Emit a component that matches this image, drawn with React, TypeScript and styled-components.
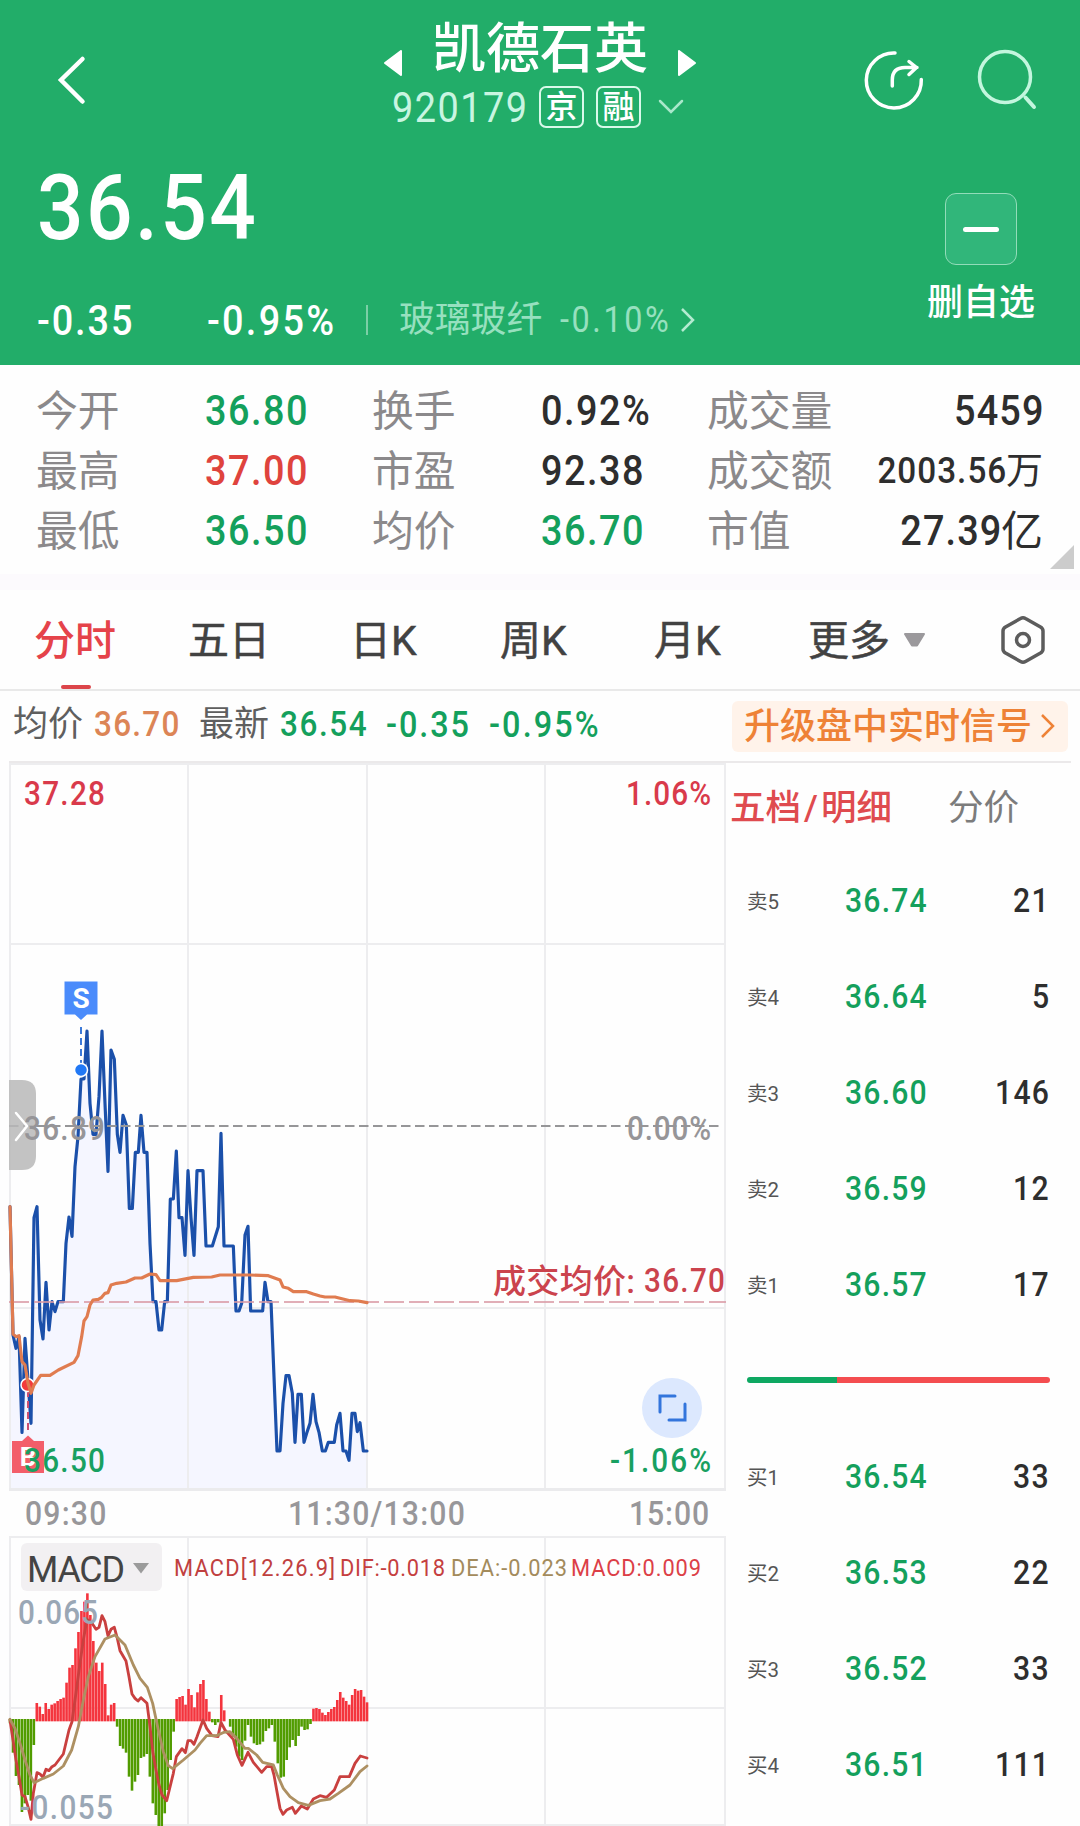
import React from "react";
import styled, { createGlobalStyle } from "styled-components";

const GREEN = "#22ad69";
const DOWN = "#14a05c";
const UP = "#df433d";
const INK = "#2e2e2e";

const GlobalStyle = createGlobalStyle`
  * { box-sizing: border-box; }
  body {
    margin: 0;
    background: #fff;
    font-family: Roboto, "Noto Sans CJK SC", sans-serif;
    color: ${INK};
  }
  svg { display: block; flex: none; }
`;

const Page = styled.main`
  width: 1080px;
  height: 1826px;
  overflow: hidden;
  display: flex;
  flex-direction: column;
  background: #fefefe;
`;

/* Figures are set narrow and loosely spaced; $right keeps the right edge fixed. */
const Num = styled.span<{
  $size: number;
  $ls?: number;
  $color?: string;
  $weight?: number;
  $right?: boolean;
}>`
  display: inline-block;
  font-size: ${(p) => p.$size}px;
  letter-spacing: ${(p) => p.$ls ?? 0.04}em;
  margin-right: ${(p) => (p.$right ? -(p.$ls ?? 0.04) * 0.9 : 0)}em;
  font-weight: ${(p) => p.$weight ?? 500};
  color: ${(p) => p.$color ?? "inherit"};
  transform: scaleX(0.9);
  transform-origin: ${(p) => (p.$right ? "right" : "left")} center;
  white-space: nowrap;
`;

/* ---------- header ---------- */

const Header = styled.header`
  height: 365px;
  flex: none;
  background: ${GREEN};
  color: #fff;
`;

const NavBar = styled.div`
  height: 140px;
  display: grid;
  grid-template-columns: 340px 400px 340px;
`;

const NavLeft = styled.div`
  padding: 55px 0 0 57px;
`;

const NavCenter = styled.div`
  display: flex;
  flex-direction: column;
  align-items: center;
  padding-top: 14px;
`;

const TitleLine = styled.div`
  display: flex;
  align-items: center;
  gap: 30px;
  height: 72px;
`;

const Title = styled.h1`
  margin: 0;
  font-size: 54px;
  line-height: 72px;
  font-weight: 500;
`;

const Step = styled.span`
  padding-top: 26px;
`;

const CodeLine = styled.div`
  width: 400px;
  display: flex;
  align-items: center;
  height: 42px;
  padding-left: 52px;
`;

const Code = styled.span`
  width: 135px;
`;

const Mark = styled.span`
  width: 45px;
  height: 42px;
  margin-left: 12px;
  border: 2px solid #d9f9ea;
  border-radius: 7px;
  font-size: 32px;
  line-height: 38px;
  text-align: center;
  font-weight: 500;
`;

const Drop = styled.span`
  margin-left: 17px;
`;

const NavRight = styled.div`
  display: flex;
  gap: 50px;
  padding: 49px 0 0 123px;
`;

const QuoteArea = styled.div`
  display: flex;
  justify-content: space-between;
  height: 225px;
`;

const QuoteLeft = styled.div`
  padding-left: 37px;
`;

const Price = styled.div`
  height: 135px;
  line-height: 136px;
`;

const ChangeLine = styled.div`
  display: flex;
  align-items: center;
  height: 90px;
`;

const Change = styled.span<{ $w: number }>`
  width: ${(p) => p.$w}px;
`;

const Divider = styled.i`
  width: 2px;
  height: 30px;
  margin: 0 31px 0 0;
  background: #7bcfa6;
`;

const Sector = styled.span`
  display: flex;
  align-items: center;
  color: #97e0bf;
  white-space: nowrap;
`;

const SectorName = styled.span`
  width: 161px;
  font-size: 35.8px;
  line-height: 50px;
`;

const SectorChange = styled.span`
  width: 119px;
`;

const Watch = styled.div`
  width: 126px;
  margin-right: 36px;
  padding-top: 53px;
  display: flex;
  flex-direction: column;
  align-items: center;
  font-size: 36px;
  font-weight: 500;
  line-height: 48px;
  white-space: nowrap;
`;

const WatchButton = styled.span`
  width: 72px;
  height: 72px;
  margin-bottom: 14px;
  display: grid;
  place-items: center;
  border: 1.5px solid #92dcb9;
  border-radius: 11px;
  background: #31b67a;
`;

const Minus = styled.i`
  width: 36px;
  height: 5px;
  border-radius: 3px;
  background: #fff;
`;

/* ---------- stats ---------- */

const Stats = styled.section`
  position: relative;
  height: 209px;
  flex: none;
  padding: 15px 37px 0 37px;
  display: grid;
  grid-template-columns: 168px 168px 168px 167px 335px;
  grid-auto-rows: 60px;
  align-items: center;
`;

const StatLabel = styled.span`
  margin-left: -1px;
  font-size: 41.8px;
  line-height: 56px;
  padding-top: 4px;
  color: #8b898b;
  white-space: nowrap;
`;

const LastStat = styled.span`
  display: flex;
  justify-content: space-between;
  align-items: center;
  height: 60px;
`;

const StatValue = styled.span`
  display: flex;
  align-items: center;
  font-weight: 400;
`;

const Unit = styled.span<{ $size: number }>`
  font-size: ${(p) => p.$size}px;
  line-height: 56px;
  padding-top: 3px;
`;

const Corner = styled.i`
  position: absolute;
  right: 6px;
  bottom: 5px;
  border-left: 24px solid transparent;
  border-bottom: 24px solid #cccccc;
`;

const Band = styled.div`
  height: 16px;
  flex: none;
  background: #fcfafd;
`;

/* ---------- tabs ---------- */

const Tabs = styled.nav`
  height: 101px;
  flex: none;
  display: flex;
  align-items: stretch;
  padding-left: 34px;
  border-bottom: 2px solid #e9e9e9;
`;

const Tab = styled.div<{ $w: number; $active?: boolean }>`
  width: ${(p) => p.$w}px;
  display: flex;
  align-items: center;
  gap: 14px;
  font-size: 41px;
  font-weight: ${(p) => (p.$active ? 500 : 400)};
  color: ${(p) => (p.$active ? "#e5434a" : "#424242")};
  -webkit-text-stroke: ${(p) => (p.$active ? "0" : "0.5px #424242")};
  white-space: nowrap;
  position: relative;
`;

const TabText = styled.span`
  line-height: 60px;
  padding-top: 3px;
`;

const Underline = styled.i`
  position: absolute;
  left: 27px;
  bottom: 0;
  width: 30px;
  height: 4px;
  border-radius: 2px;
  background: #dc454a;
`;

/* ---------- info line ---------- */

const InfoLine = styled.div`
  height: 72px;
  flex: none;
  margin: 0 9px;
  padding-left: 4px;
  display: flex;
  align-items: center;
  border-bottom: 2px solid #ebe9ea;
`;

const InfoItem = styled.span<{ $w: number }>`
  width: ${(p) => p.$w}px;
  font-size: 35px;
  line-height: 60px;
  padding-bottom: 2px;
  color: #5f5f5f;
  white-space: nowrap;
`;

const Upgrade = styled.span`
  width: 336px;
  height: 51px;
  margin-left: auto;
  margin-right: 3px;
  padding: 0 13px 0 12px;
  display: flex;
  align-items: center;
  justify-content: space-between;
  border-radius: 6px;
  background: #fff3ea;
  color: #ee8236;
  font-size: 36px;
  font-weight: 500;
  white-space: nowrap;
`;

const UpgradeText = styled.span`
  line-height: 48px;
  padding-top: 2px;
`;

/* ---------- body ---------- */

const Body = styled.section`
  flex: 1;
  display: grid;
  grid-template-columns: 727px 353px;
  min-height: 0;
`;

const Charts = styled.div`
  display: flex;
  flex-direction: column;
`;

const TimeAxis = styled.div`
  height: 45px;
  display: grid;
  grid-template-columns: 263px 1fr auto;
  align-items: center;
  padding: 0 18px 1px 25px;
  color: #98979a;
`;

const Book = styled.div`
  display: flex;
  flex-direction: column;
  padding: 0 31px 0 20px;
`;

const BookTabs = styled.div`
  height: 89px;
  margin-left: -17px;
  padding-bottom: 7px;
  display: flex;
  align-items: center;
  font-size: 35.5px;
  white-space: nowrap;
`;

const BookTab = styled.span<{ $w: number; $active?: boolean }>`
  width: ${(p) => p.$w}px;
  color: ${(p) => (p.$active ? "#df4b4f" : "#7c7c7c")};
  font-weight: ${(p) => (p.$active ? 500 : 400)};
`;

const Slash = styled.span`
  margin: 0 3px;
`;

const BookRow = styled.div`
  height: 96px;
  flex: none;
  display: grid;
  grid-template-columns: 98px 100px 1fr;
  align-items: center;
  > :last-child { justify-self: end; }
`;

const Level = styled.span`
  font-size: 20.5px;
  color: #555;
`;

const Ratio = styled.div`
  height: 96px;
  flex: none;
  display: flex;
  align-items: center;
  margin-right: -1px;
`;

const RatioPart = styled.i<{ $grow: number; $color: string }>`
  flex: ${(p) => p.$grow};
  height: 6px;
  background: ${(p) => p.$color};
  &:first-child { border-radius: 3px 0 0 3px; }
  &:last-child { border-radius: 0 3px 3px 0; }
`;

/* ---------- chart data, in thirds of a pixel ---------- */

const priceLine =
  "30,740 39,1125 48,1165 57,1130 66,1417 75,1135 84,1260 93,1390 102,773 111,740 120,1080 129,1137 138,967 147,1110 156,1025 165,1055 174,1025 190,1025 198,850 207,771 216,829 225,620 234,530 243,357 252,357 261,213 270,430 279,523 288,523 297,410 306,213 315,430 324,634 333,270 343,298 352,523 360,577 369,466 379,495 388,745 397,745 406,577 415,577 423,466 432,577 441,577 450,850 459,1025 468,1025 477,1110 485,1110 494,1025 502,1025 511,717 520,717 529,573 537,773 546,773 555,886 564,632 573,773 582,886 591,632 609,632 618,858 637,858 655,800 663,520 672,858 700,858 708,1053 717,1053 725,1030 735,825 744,799 752,1053 788,1053 795,967 804,1025 813,1025 822,1250 831,1473 840,1473 849,1330 858,1247 867,1247 877,1300 885,1447 894,1303 904,1303 912,1447 920,1420 930,1390 939,1303 948,1385 957,1417 967,1473 976,1473 985,1447 1003,1447 1010,1395 1020,1360 1029,1473 1038,1473 1047,1501 1056,1360 1065,1360 1072,1415 1080,1388 1090,1473 1101,1473";

const averageLine =
  "30,740 39,1122 48,1130 57,1127 66,1205 75,1215 84,1270 93,1300 102,1275 122,1246 150,1246 175,1230 222,1207 234,1187 245,1130 252,1083 261,1070 270,1035 279,1020 295,1018 305,1012 315,1000 324,998 333,975 350,970 378,966 405,954 425,954 450,942 468,944 480,962 530,962 580,952 635,951 660,945 750,945 805,947 840,960 849,981 865,985 880,995 920,995 940,1002 960,1008 975,1011 1005,1011 1050,1022 1075,1023 1101,1028";

const difLine =
  "30,570 39,630 48,690 57,740 66,795 75,800 84,830 93,868 100,790 111,728 120,732 129,742 138,718 147,722 156,710 165,705 190,672 207,600 216,575 225,510 240,400 250,330 261,268 275,278 288,298 297,292 306,257 315,275 324,318 333,298 343,292 352,325 360,362 378,393 387,440 396,492 405,505 414,513 423,503 441,520 450,590 459,670 468,720 477,765 486,795 500,812 520,730 529,680 546,656 556,668 564,632 573,632 582,643 591,620 609,570 620,595 636,617 654,620 663,577 675,600 700,628 712,675 726,706 744,667 760,697 785,727 800,710 815,710 822,735 830,780 840,835 849,853 860,840 877,832 886,850 904,828 922,837 940,807 960,797 980,802 1003,780 1020,740 1048,740 1065,700 1081,678 1101,684";

const deaLine =
  "30,568 45,595 60,640 75,690 90,735 102,758 130,745 160,732 190,708 215,660 235,590 250,510 265,440 285,380 315,327 345,315 375,345 400,405 420,445 442,472 458,520 475,600 490,665 505,707 518,716 550,690 585,660 600,640 620,617 650,617 672,607 690,605 710,625 735,655 745,655 770,675 788,697 820,705 832,735 850,775 870,800 895,818 925,826 960,812 990,807 1015,790 1050,765 1080,725 1101,708";

const MACD_ZERO = 570;
const macdBars = [
  580, 668, 738, 765, 846, 820, 795, 812, 645, 519, 530, 552, 519, 537, 524, 520, 513, 507, 503, 458,
  413, 405, 355, 306, 243, 215, 190, 255, 333, 398, 423, 398, 462, 556, 524, 519, 590, 648, 656, 668,
  740, 782, 755, 735, 684, 680, 672, 740, 820, 855, 888, 888, 850, 780, 690, 605, 507, 501, 498, 524,
  477, 495, 532, 487, 462, 450, 507, 545, 577, 585, 577, 495, 541, 570, 590, 620, 650, 680, 690, 632,
  585, 620, 640, 645, 643, 635, 603, 595, 585, 635, 700, 743, 740, 690, 652, 630, 648, 618, 590, 600,
  598, 582, 536, 534, 537, 548, 555, 546, 537, 531, 510, 486, 503, 513, 524, 495, 477, 482, 480, 500, 517,
];

type LabelProps = {
  x: number;
  y: number;
  w: number;
  size?: number;
  color: string;
  weight?: number;
  narrow?: number;
  children: string;
};

const Label = ({ x, y, w, size = 33, color, weight = 500, narrow = 0.9, children }: LabelProps) => (
  <text
    transform={`translate(${x} ${y}) scale(${narrow} 1)`}
    textLength={w / narrow}
    lengthAdjust="spacing"
    fontSize={size}
    fill={color}
    fontWeight={weight}
  >
    {children}
  </text>
);

const GridLines = ({ top, bottom, rows }: { top: number; bottom: number; rows: number[] }) => (
  <g stroke="#ededef" strokeWidth="2">
    {[10, 188, 367, 545, 725].map((x) => (
      <line key={x} x1={x} x2={x} y1={top} y2={bottom} />
    ))}
    {rows.map((y) => (
      <line key={y} x1="9" x2="726" y1={y} y2={y} />
    ))}
  </g>
);

const PriceChart = () => (
  <svg width="727" height="728" viewBox="0 763 727 728">
    <g transform="translate(0 960) scale(.33333)">
      <polygon points={`30,1590 ${priceLine} 1101,1590`} fill="#f5f6ff" />
    </g>
    <GridLines top={763} bottom={1490} rows={[764, 944, 1308]} />
    <line x1="9" x2="726" y1="1489.5" y2="1489.5" stroke="#ebebed" strokeWidth="3" />
    <g transform="translate(0 960) scale(.33333)" fill="none" strokeLinejoin="round" strokeLinecap="round">
      <polyline points={priceLine} stroke="#1b50aa" strokeWidth="9.5" />
    </g>
    <line x1="9" x2="723" y1="1126" y2="1126" stroke="#969698" strokeWidth="2" strokeDasharray="9.500 4.500" />
    <line x1="9" x2="726" y1="1302" y2="1302" stroke="#d99aa5" strokeOpacity=".8" strokeWidth="2" strokeDasharray="20 5" />

    <line x1="28" x2="28" y1="1390" y2="1431" stroke="#cc4f70" strokeWidth="2" strokeDasharray="7 4" />
    <circle cx="27.5" cy="1385" r="6.5" fill="#f33b3b" stroke="#fff" strokeWidth="1.5" />
    <g transform="translate(0 960) scale(.33333)" fill="none" strokeLinejoin="round" strokeLinecap="round">
      <polyline points={averageLine} stroke="#e07c50" strokeWidth="9.5" />
    </g>
    <path d="M12 1441H22L28 1435.500L34 1441H44V1473H12Z" fill="#f35e6a" />
    <text x="28" y="1466" textAnchor="middle" fontSize="26" fontWeight="700" fill="#fff">B</text>

    <path d="M64.500 981.500H97.500V1014.500H87L81 1020L75 1014.500H64.500Z" fill="#4a8bfb" />
    <text x="81" y="1008" textAnchor="middle" fontSize="28" fontWeight="700" fill="#fff">S</text>
    <line x1="81" x2="81" y1="1027" y2="1064" stroke="#3c79d8" strokeWidth="2" strokeDasharray="7 4" />
    <circle cx="81" cy="1070" r="6.500" fill="#2178f5" stroke="#fff" strokeWidth="1.500" />

    <path d="M9 1080H22Q36 1080 36 1094V1156Q36 1170 22 1170H9Z" fill="#b9b9b9" fillOpacity=".85" />
    <path d="M16 1113L27 1126L16 1140" fill="none" stroke="#fff" strokeWidth="2.500" strokeLinecap="round" />

    <Label x={24} y={804.5} w={81} color="#d93a4b">37.28</Label>
    <Label x={626} y={804.5} w={85} color="#d93a4b">1.06%</Label>
    <Label x={24} y={1140} w={81} color="#969598">36.89</Label>
    <Label x={627} y={1140} w={84} color="#969598">0.00%</Label>
    <Label x={24} y={1472} w={81} color="#18a061">36.50</Label>
    <Label x={610} y={1472} w={101} color="#18a061">-1.06%</Label>
    <Label x={493} y={1293} w={142} narrow={1} color="#cb434d">成交均价:</Label>
    <Label x={644} y={1292} w={81} color="#cb434d">36.70</Label>

    <circle cx="672" cy="1408" r="30" fill="#dce8fe" />
    <path d="M660 1412V1396H675M685 1404V1420H669" fill="none" stroke="#3375dc" strokeWidth="3" strokeLinecap="round" />
  </svg>
);

const MacdChart = () => (
  <svg width="727" height="290" viewBox="0 1536 727 290">
    <GridLines top={1537} bottom={1825} rows={[1537, 1708, 1825]} />
    <g transform="translate(0 1530) scale(.33333)" fill="none" strokeLinejoin="round" strokeLinecap="round">
      {macdBars.map((v, i) => {
        const up = v < MACD_ZERO;
        const x = 30 + i * 8.925;
        return v === MACD_ZERO ? null : (
          <rect
            key={i}
            x={x - 3.8}
            y={up ? v : 567}
            width="7.8"
            height={up ? 574 - v : v - 567}
            fill={up ? "#f4343d" : "#519c00"}
          />
        );
      })}
      <polyline points={difLine} stroke="#c9403f" strokeWidth="8.5" />
      <polyline points={deaLine} stroke="#ad9062" strokeWidth="8.5" />
    </g>
    <rect x="21" y="1543" width="141" height="48" rx="6" fill="#f2f0f2" />
    <Label x={27} y={1582} w={98} size={37} weight={400} narrow={0.97} color="#444">MACD</Label>
    <path d="M133 1563H149L141 1573.500Z" fill="#9b9b9b" />
    <Label x={174} y={1575.5} w={161} size={23} weight={400} narrow={0.95} color="#c0403f">MACD[12.26.9]</Label>
    <Label x={340} y={1575.5} w={105} size={23} weight={400} narrow={0.95} color="#c53f40">DIF:-0.018</Label>
    <Label x={451} y={1575.5} w={116} size={23} weight={400} narrow={0.95} color="#a38b5c">DEA:-0.023</Label>
    <Label x={571} y={1575.5} w={130} size={23} weight={400} narrow={0.95} color="#dc3f47">MACD:0.009</Label>
    <Label x={18} y={1624} w={80} color="#9aa7b5">0.065</Label>
    <Label x={20} y={1819} w={93} color="#9aa7b5">-0.055</Label>
  </svg>
);

type Order = { level: string; price: string; qty: string };

const sells: Order[] = [
  { level: "卖5", price: "36.74", qty: "21" },
  { level: "卖4", price: "36.64", qty: "5" },
  { level: "卖3", price: "36.60", qty: "146" },
  { level: "卖2", price: "36.59", qty: "12" },
  { level: "卖1", price: "36.57", qty: "17" },
];

const buys: Order[] = [
  { level: "买1", price: "36.54", qty: "33" },
  { level: "买2", price: "36.53", qty: "22" },
  { level: "买3", price: "36.52", qty: "33" },
  { level: "买4", price: "36.51", qty: "111" },
];

const Orders = ({ items }: { items: Order[] }) => (
  <>
    {items.map((o) => (
      <BookRow key={o.level}>
        <Level>{o.level}</Level>
        <Num $size={33.5} $color={DOWN}>{o.price}</Num>
        <Num $size={33.5} $right>{o.qty}</Num>
      </BookRow>
    ))}
  </>
);

const stats = [
  { a: "今开", av: "36.80", ac: DOWN, b: "换手", bv: "0.92%", bc: INK, c: "成交量", cv: "5459", unit: "", size: 42 },
  { a: "最高", av: "37.00", ac: UP, b: "市盈", bv: "92.38", bc: INK, c: "成交额", cv: "2003.56", unit: "万", size: 37 },
  { a: "最低", av: "36.50", ac: DOWN, b: "均价", bv: "36.70", bc: DOWN, c: "市值", cv: "27.39", unit: "亿", size: 42 },
];

export default function App() {
  return (
    <Page>
      <GlobalStyle />
      <Header>
        <NavBar>
          <NavLeft>
            <svg width="30" height="50" viewBox="0 0 30 50" fill="none" stroke="#fff" strokeWidth="4.5" strokeLinecap="round">
              <path d="M25.500 4L4 25L25.500 46.500" />
            </svg>
          </NavLeft>
          <NavCenter>
            <TitleLine>
              <Step>
                <svg width="18" height="26" viewBox="0 0 18 26" fill="#fff" stroke="#fff" strokeWidth="2" strokeLinejoin="round">
                  <path d="M17 1V25L1 13Z" />
                </svg>
              </Step>
              <Title>凯德石英</Title>
              <Step>
                <svg width="18" height="26" viewBox="0 0 18 26" fill="#fff" stroke="#fff" strokeWidth="2" strokeLinejoin="round">
                  <path d="M1 1V25L17 13Z" />
                </svg>
              </Step>
            </TitleLine>
            <CodeLine>
              <Code><Num $size={42} $ls={0.04} $color="#c9f5e1" $weight={400}>920179</Num></Code>
              <Mark>京</Mark>
              <Mark>融</Mark>
              <Drop>
                <svg width="26" height="16" viewBox="0 0 26 16" fill="none" stroke="#a9e8cb" strokeWidth="2.500" strokeLinecap="round">
                  <path d="M2 2L13 13L24 2" />
                </svg>
              </Drop>
            </CodeLine>
          </NavCenter>
          <NavRight>
            <svg width="62" height="62" viewBox="863 49 62 62" fill="none" stroke="#fff" strokeWidth="3.500" strokeLinecap="round" strokeLinejoin="round">
              <path d="M895 53A27.500 27.500 0 1 0 921.300 79.500" />
              <path d="M892.300 86V80Q892.300 67.500 905 67.500H917M909 61.500L916.500 67.500L909 74.500" />
            </svg>
            <svg width="62" height="62" viewBox="975 49 62 62" fill="none" stroke="#c3f6de" strokeWidth="3.500" strokeLinecap="round">
              <circle cx="1005" cy="77" r="25.500" />
              <path d="M1025.500 97.500L1034 107" strokeWidth="4" />
            </svg>
          </NavRight>
        </NavBar>
        <QuoteArea>
          <QuoteLeft>
            <Price><Num $size={91} $ls={0.03}>36.54</Num></Price>
            <ChangeLine>
              <Change $w={170}><Num $size={42} $ls={0.05}>-0.35</Num></Change>
              <Change $w={159}><Num $size={42} $ls={0.06}>-0.95%</Num></Change>
              <Divider />
              <Sector>
                <SectorName>玻璃玻纤</SectorName>
                <SectorChange><Num $size={36} $ls={0.08} $weight={400}>-0.10%</Num></SectorChange>
                <svg width="18" height="26" viewBox="0 0 18 26" fill="none" stroke="#b4ebd1" strokeWidth="2.500">
                  <path d="M3 2L14 13L3 24" />
                </svg>
              </Sector>
            </ChangeLine>
          </QuoteLeft>
          <Watch>
            <WatchButton>
              <Minus />
            </WatchButton>
            删自选
          </Watch>
        </QuoteArea>
      </Header>

      <Stats>
        {stats.map((s) => (
          <React.Fragment key={s.a}>
            <StatLabel>{s.a}</StatLabel>
            <Num $size={42} $color={s.ac}>{s.av}</Num>
            <StatLabel>{s.b}</StatLabel>
            <Num $size={42} $color={s.bc}>{s.bv}</Num>
            <LastStat>
              <StatLabel>{s.c}</StatLabel>
              <StatValue>
                <Num $size={s.size} $ls={0.03} $right>{s.cv}</Num>
                {s.unit && <Unit $size={s.size}>{s.unit}</Unit>}
              </StatValue>
            </LastStat>
          </React.Fragment>
        ))}
        <Corner />
      </Stats>
      <Band />

      <Tabs>
        <Tab $w={154} $active>
          <TabText>分时</TabText>
          <Underline />
        </Tab>
        <Tab $w={162}><TabText>五日</TabText></Tab>
        <Tab $w={150}><TabText>日K</TabText></Tab>
        <Tab $w={154}><TabText>周K</TabText></Tab>
        <Tab $w={154}><TabText>月K</TabText></Tab>
        <Tab $w={192}>
          <TabText>更多</TabText>
          <svg width="22" height="14" viewBox="0 0 22 14" fill="#9b999c" stroke="#9b999c" strokeWidth="2" strokeLinejoin="round">
            <path d="M1 1H20L13 12.500H8Z" />
          </svg>
        </Tab>
        <Tab $w={50}>
          <svg width="46" height="50" viewBox="0 0 46 50" fill="none" stroke="#5c5c5c" strokeWidth="3.500" strokeLinejoin="round">
            <path d="M20.500 3.500Q23 2 25.500 3.500L40.500 12Q43 13.500 43 16V34Q43 36.500 40.500 38L25.500 46.500Q23 48 20.500 46.500L5.500 38Q3 36.500 3 34V16Q3 13.500 5.500 12Z" />
            <circle cx="23" cy="25" r="6.500" />
          </svg>
        </Tab>
      </Tabs>

      <InfoLine>
        <InfoItem $w={81}>均价</InfoItem>
        <InfoItem $w={105}><Num $size={35} $color="#dc8556">36.70</Num></InfoItem>
        <InfoItem $w={81}>最新</InfoItem>
        <InfoItem $w={106}><Num $size={35} $ls={0.05} $color={DOWN}>36.54</Num></InfoItem>
        <InfoItem $w={103}><Num $size={36} $ls={0.06} $color={DOWN}>-0.35</Num></InfoItem>
        <InfoItem $w={120}><Num $size={36} $ls={0.065} $color={DOWN}>-0.95%</Num></InfoItem>
        <Upgrade>
          <UpgradeText>升级盘中实时信号</UpgradeText>
          <svg width="15" height="26" viewBox="0 0 15 26" fill="none" stroke="#ee8236" strokeWidth="2.500">
            <path d="M2 2L13 13L2 24" />
          </svg>
        </Upgrade>
      </InfoLine>

      <Body>
        <Charts>
          <PriceChart />
          <TimeAxis>
            <Num $size={33.5}>09:30</Num>
            <Num $size={33.5}>11:30/13:00</Num>
            <Num $size={33.5} $ls={0.03} $right>15:00</Num>
          </TimeAxis>
          <MacdChart />
        </Charts>
        <Book>
          <BookTabs>
            <BookTab $w={218} $active>五档<Slash>/</Slash>明细</BookTab>
            <BookTab $w={80}>分价</BookTab>
          </BookTabs>
          <Orders items={sells} />
          <Ratio>
            <RatioPart $grow={90} $color="#0ea862" />
            <RatioPart $grow={213} $color="#f44d50" />
          </Ratio>
          <Orders items={buys} />
        </Book>
      </Body>
    </Page>
  );
}
